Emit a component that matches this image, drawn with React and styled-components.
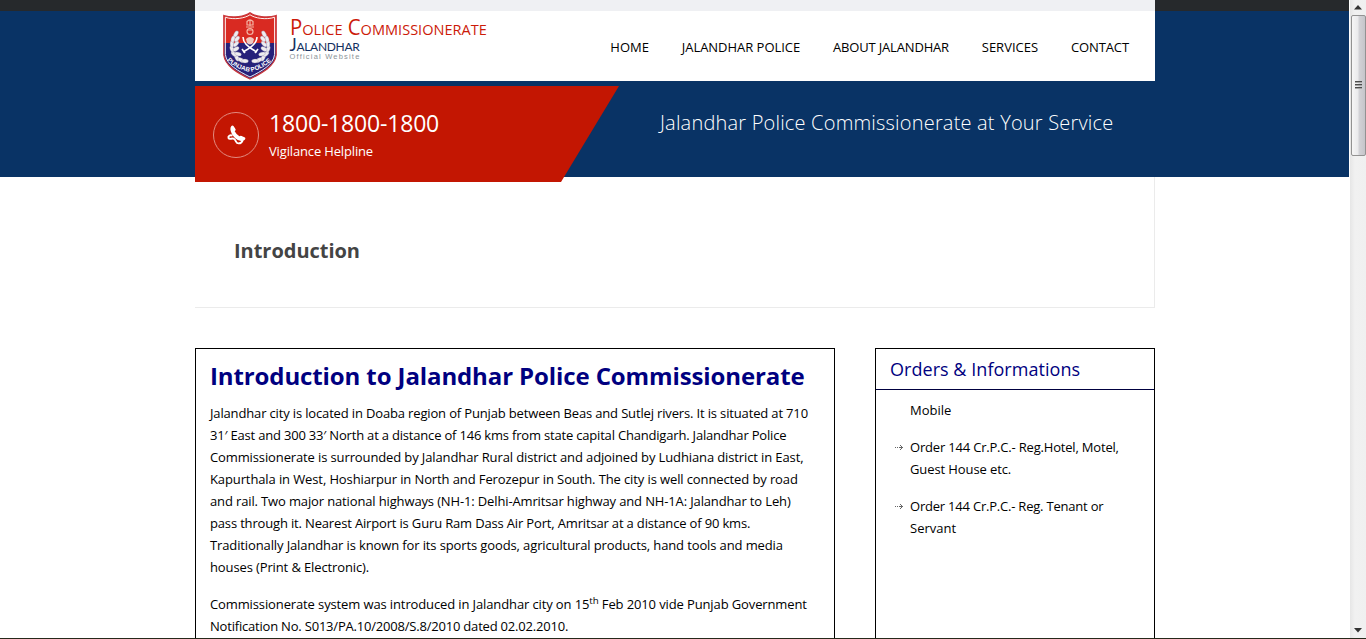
import React from "react";
import styled, { createGlobalStyle } from "styled-components";

const GlobalStyle = createGlobalStyle`
  * { box-sizing: border-box; }
  html, body { margin: 0; overflow: hidden; background: #fff; }
  body { font-family: "Open Sans", "Noto Sans", sans-serif; font-size: 13px; line-height: 22px; color: #000; }
  h1, h2, h3, p, ul { margin: 0; padding: 0; font-weight: 400; }
`;

const Window = styled.div`
  display: flex;
  width: 1366px;
  height: 639px;
  overflow: hidden;
  border-bottom: 1px solid #26291b;
`;

const Page = styled.div`
  width: 1350px;
  height: 638px;
  overflow: hidden;
`;

const TopBar = styled.div`
  height: 11px;
  width: 1349px;
  padding-left: 195px;
  background: #26292c;
`;

const TopBarInner = styled.div`
  width: 960px;
  height: 11px;
  background: #eff0f3;
`;

const Header = styled.header`
  width: 1349px;
  height: 166px;
  padding-left: 195px;
  background: #093365;
`;

const NavBar = styled.div`
  display: flex;
  justify-content: space-between;
  width: 960px;
  height: 70px;
  padding: 1px 26px 0 28px;
  background: #fff;
`;

const Brand = styled.a`
  display: flex;
  gap: 12.5px;
`;

const BrandText = styled.div`
  display: flex;
  flex-direction: column;
  width: 200px;
  padding-top: 6px;
  white-space: nowrap;
`;

const BrandTitle = styled.span`
  height: 19px;
  font: 400 21px/19px "Open Sans", sans-serif;
  font-variant: small-caps;
  transform: scaleX(0.97);
  transform-origin: 0 0;
  color: #cc1a08;
`;

const BrandCity = styled.span`
  height: 15px;
  font: 400 17px/15px Lato, sans-serif;
  font-variant: small-caps;
  letter-spacing: -0.3px;
  color: #14305f;
`;

const BrandNote = styled.span`
  height: 8px;
  margin-top: 1px;
  font: 400 7.5px/8px "Liberation Sans", sans-serif;
  letter-spacing: 1.2px;
  color: #8b9499;
`;

const Nav = styled.nav`
  display: flex;
  gap: 32.8px;
  padding-top: 24px;
`;

const NavLink = styled.a`
  white-space: nowrap;
  letter-spacing: ${(p) => p.$spacing || "0"};
`;

const Banner = styled.div`
  display: flex;
  width: 960px;
  padding-top: 5px;
`;

const Helpline = styled.div`
  display: flex;
  flex: none;
  width: 424px;
  height: 96px;
  padding: 26px 0 0 18px;
  gap: 10px;
  background: #c31602;
  clip-path: polygon(0 0, 100% 0, 366px 100%, 0 100%);
  color: #fff;
`;

const PhoneBadge = styled.div`
  display: flex;
  align-items: center;
  justify-content: center;
  width: 46px;
  height: 46px;
  border: 1px solid #e18b80;
  border-radius: 50%;
`;

const HelplineText = styled.div`
  display: flex;
  flex-direction: column;
  white-space: nowrap;
`;

const PhoneNumber = styled.span`
  height: 28px;
  font-size: 23px;
  line-height: 23px;
  letter-spacing: -0.18px;
`;

const PhoneCaption = styled.span`
  letter-spacing: -0.15px;
`;

const Slogan = styled.h2`
  padding: 22px 0 0 41px;
  font-size: 20px;
  font-weight: 300;
  line-height: 30px;
  white-space: nowrap;
  letter-spacing: 0.19px;
  color: #fff;
`;

const TitleBand = styled.section`
  width: 960px;
  height: 131px;
  margin-left: 195px;
  padding: 60px 0 0 39px;
  border-right: 1px solid #ebebeb;
  border-bottom: 1px solid #ebebeb;
`;

const PageTitle = styled.h1`
  font-size: 20px;
  font-weight: 700;
  line-height: 28px;
  letter-spacing: -0.03px;
  color: #444;
`;

const Content = styled.main`
  display: flex;
  gap: 40px;
  padding: 40px 0 0 195px;
`;

const Article = styled.article`
  width: 640px;
  height: 360px;
  padding: 11px 14px;
  border: 1px solid #000;
`;

const ArticleTitle = styled.h2`
  height: 42px;
  font-size: 24px;
  font-weight: 700;
  line-height: 32px;
  white-space: nowrap;
  letter-spacing: -0.11px;
  color: #000080;
`;

const Paragraph = styled.p`
  margin-bottom: 15px;
`;

const Line = styled.span`
  display: block;
  height: 22px;
  white-space: nowrap;
  letter-spacing: ${(p) => p.$spacing || "0"};

  sup { font-size: 9.75px; line-height: 0; vertical-align: super; }
`;

const Sidebar = styled.aside`
  width: 280px;
  height: 360px;
  border: 1px solid #000;
`;

const SidebarTitle = styled.h3`
  height: 41px;
  padding: 5px 14px;
  border-bottom: 1px solid #000040;
  font-size: 18px;
  font-weight: 400;
  line-height: 30px;
  white-space: nowrap;
  letter-spacing: 0.04px;
  color: #000080;
`;

const Orders = styled.ul`
  display: flex;
  flex-direction: column;
  gap: 15px;
  padding: 9px 0 0 19px;
  list-style: none;
`;

const Order = styled.li`
  display: flex;
  gap: 6px;
`;

const ArrowSlot = styled.span`
  width: 9px;
  padding-top: 9px;
  line-height: 0;
`;

const ScrollBar = styled.div`
  display: flex;
  flex-direction: column;
  align-items: center;
  width: 16px;
  height: 638px;
  background: linear-gradient(90deg, #e6e6e6, #f1f1f1 30%, #f0f0f0);
`;

const ScrollArrow = styled.div`
  display: flex;
  align-items: center;
  justify-content: center;
  height: 15px;
  line-height: 0;
`;

const ScrollThumb = styled.div`
  display: flex;
  flex-direction: column;
  align-items: center;
  justify-content: center;
  gap: 2px;
  width: 15px;
  height: 141px;
  padding-bottom: 2px;
  margin-bottom: auto;
  border: 1px solid #929292;
  border-radius: 2px;
  background: linear-gradient(90deg, #f6f6f6, #eaeaec 45%, #d2d2d6 55%, #c5c5ca);
`;

const Grip = styled.i`
  width: 7px;
  height: 1px;
  background: #4c4c4c;
  box-shadow: 0 1px 0 #a5a5a5;
`;

function Shield() {
  const leaves = [
    [14, 46, -30], [11, 42, -50], [9, 37, -20], [9, 32, 0], [10, 27, 15], [13, 22, 30],
    [18, 48, -60], [15, 42, -75], [13, 37, 60], [13, 32, 45], [14, 27, 40], [22, 49, -85],
  ];
  const wreath = leaves.map(([x, y, a]) => (
    <ellipse key={x + "-" + y} cx={x} cy={y} rx="1.9" ry="3.4" transform={`rotate(${a} ${x} ${y})`} />
  ));
  const outline = "M27 .8C22 4.500 10 6.500 .8 3.500V43C2 54 15 61 27 67C39 61 52 54 53.200 43V3.500C44 6.500 32 4.500 27 .8Z";
  return (
    <svg width="54" height="68" viewBox="0 0 54 68">
      <defs>
        <clipPath id="shield"><path d={outline} /></clipPath>
        <path id="motto" d="M3.500 47.500Q11 56.500 27 60Q43 56.500 51 45.500" />
      </defs>
      <g clipPath="url(#shield)">
        <rect width="54" height="31" fill="#d92a22" />
        <rect y="31" width="54" height="37" fill="#26217a" />
      </g>
      <path d={outline} fill="none" stroke="#c9383c" strokeWidth="1.300" />
      <path d={outline} fill="none" stroke="#fff" strokeWidth="1" transform="translate(1.600 2) scale(.94)" />
      <g fill="#efedf0" stroke="#8d87a5" strokeWidth=".3">
        {wreath}
        <g transform="translate(54 0) scale(-1 1)">{wreath}</g>
      </g>
      <g fill="none" stroke="#f3b3a4" strokeWidth="1.200">
        <path d="M24 9.500Q27 6.500 30 9.500V13H24ZM27 8V14M23 15H31M24 18H30" />
        <circle cx="27" cy="19.500" r="3" />
      </g>
      <path d="M20 25Q20 33 34 40M34 25Q34 33 20 40M19 37L22 41M35 37L32 41" fill="none" stroke="#fff" strokeWidth="1.600" />
      <path d="M23 27Q27 23 31 27L30 31Q27 34 24 31Z" fill="#efc8c0" />
      <text fill="#fff" fontFamily="Liberation Sans, sans-serif" fontSize="6.200" fontWeight="700">
        <textPath href="#motto" startOffset="1">PUNJAB POLICE</textPath>
      </text>
    </svg>
  );
}

function PhoneIcon() {
  return (
    <svg width="20" height="20" viewBox="0 0 20 20">
      <path d="M5.200 1.200Q6.500 -.2 7.700 1.200L9.600 4.200Q9.900 5.400 8.700 6.200Q10.200 9.200 13.400 11.200Q14.500 10.300 15.600 10.900L19 12.500Q19.900 13.600 18.500 15Q14 17.600 9.200 13.200Q4.700 8.600 4.400 4.200Q4.400 2.100 5.200 1.200Z" fill="#fff" />
      <path d="M6.500 10.600C4 9.600 1.800 11.200 2.500 13C3.500 15.300 6.200 12.300 8.300 14.100C10.400 15.900 9.700 18.200 12.600 18.400C14.700 18.400 16.200 17.200 16.700 15" fill="none" stroke="#fff" strokeWidth="1.900" />
    </svg>
  );
}

function Arrow() {
  return (
    <svg width="9" height="5" viewBox="0 0 9 5" fill="#666" shapeRendering="crispEdges">
      <path d="M0 2h1v1h-1zM2 2h1v1h-1zM4 2h4v1h-4zM6 1h1v3h-1zM5 0h1v1h-1zM5 4h1v1h-1z" />
    </svg>
  );
}

const navItems = [
  { label: "HOME" },
  { label: "JALANDHAR POLICE", spacing: "-0.03px" },
  { label: "ABOUT JALANDHAR", spacing: "-0.17px" },
  { label: "SERVICES" },
  { label: "CONTACT", spacing: "-0.1px" },
];

const intro = [
  ["Jalandhar city is located in Doaba region of Punjab between Beas and Sutlej rivers. It is situated at 710", "-0.152px"],
  ["31′ East and 300 33′ North at a distance of 146 kms from state capital Chandigarh. Jalandhar Police", "-0.19px"],
  ["Commissionerate is surrounded by Jalandhar Rural district and adjoined by Ludhiana district in East,", "-0.12px"],
  ["Kapurthala in West, Hoshiarpur in North and Ferozepur in South. The city is well connected by road", "-0.112px"],
  ["and rail. Two major national highways (NH-1: Delhi-Amritsar highway and NH-1A: Jalandhar to Leh)", "-0.137px"],
  ["pass through it. Nearest Airport is Guru Ram Dass Air Port, Amritsar at a distance of 90 kms.", "-0.161px"],
  ["Traditionally Jalandhar is known for its sports goods, agricultural products, hand tools and media", "-0.12px"],
  ["houses (Print & Electronic).", "-0.12px"],
];

const orders = [
  { lines: [["Mobile"]] },
  { arrow: true, lines: [["Order 144 Cr.P.C.- Reg.Hotel, Motel,", "-0.19px"], ["Guest House etc.", "-0.1px"]] },
  { arrow: true, lines: [["Order 144 Cr.P.C.- Reg. Tenant or", "-0.21px"], ["Servant"]] },
];

export default function App() {
  return (
    <Window>
      <GlobalStyle />
      <Page>
        <TopBar><TopBarInner /></TopBar>
        <Header>
          <NavBar>
            <Brand>
              <Shield />
              <BrandText>
                <BrandTitle>Police Commissionerate</BrandTitle>
                <BrandCity>Jalandhar</BrandCity>
                <BrandNote>Official Website</BrandNote>
              </BrandText>
            </Brand>
            <Nav>
              {navItems.map((n) => <NavLink key={n.label} $spacing={n.spacing}>{n.label}</NavLink>)}
            </Nav>
          </NavBar>
          <Banner>
            <Helpline>
              <PhoneBadge><PhoneIcon /></PhoneBadge>
              <HelplineText>
                <PhoneNumber>1800-1800-1800</PhoneNumber>
                <PhoneCaption>Vigilance Helpline</PhoneCaption>
              </HelplineText>
            </Helpline>
            <Slogan>Jalandhar Police Commissionerate at Your Service</Slogan>
          </Banner>
        </Header>
        <TitleBand><PageTitle>Introduction</PageTitle></TitleBand>
        <Content>
          <Article>
            <ArticleTitle>Introduction to Jalandhar Police Commissionerate</ArticleTitle>
            <Paragraph>
              {intro.map(([text, spacing]) => <Line key={text} $spacing={spacing}>{text}</Line>)}
            </Paragraph>
            <Paragraph>
              <Line $spacing="-0.12px">Commissionerate system was introduced in Jalandhar city on 15<sup>th</sup> Feb 2010 vide Punjab Government</Line>
              <Line $spacing="-0.2px">Notification No. S013/PA.10/2008/S.8/2010 dated 02.02.2010.</Line>
            </Paragraph>
          </Article>
          <Sidebar>
            <SidebarTitle>Orders &amp; Informations</SidebarTitle>
            <Orders>
              {orders.map((o) => (
                <Order key={o.lines[0][0]}>
                  <ArrowSlot>{o.arrow && <Arrow />}</ArrowSlot>
                  <div>{o.lines.map(([text, spacing]) => <Line key={text} $spacing={spacing}>{text}</Line>)}</div>
                </Order>
              ))}
            </Orders>
          </Sidebar>
        </Content>
      </Page>
      <ScrollBar>
        <ScrollArrow>
          <svg width="8" height="5"><path d="M4 0L8 4.500H0Z" fill="#333" /></svg>
        </ScrollArrow>
        <ScrollThumb><Grip /><Grip /><Grip /></ScrollThumb>
        <ScrollArrow>
          <svg width="8" height="5"><path d="M0 0H8L4 4.500Z" fill="#333" /></svg>
        </ScrollArrow>
      </ScrollBar>
    </Window>
  );
}
